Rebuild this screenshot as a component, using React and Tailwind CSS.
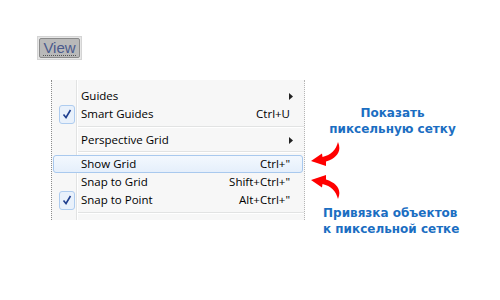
import React from 'react';

const CheckBox = () => (
  <div className="w-[16px] h-[19px] ml-[5px] flex items-center justify-center rounded-[3px] border border-[#aeccef] bg-[#e9f1fb]">
    <svg width="10" height="10" viewBox="0 0 10 10">
      <path d="M1.5 5.5 L4 8.5 L8.5 1" fill="none" stroke="#1f3f8f" strokeWidth="1.6" />
    </svg>
  </div>
);

const SubArrow = () => (
  <svg width="4" height="7" viewBox="0 0 4 7">
    <path d="M0 0 L4 3.5 L0 7 Z" fill="#222" />
  </svg>
);

const MenuItem = ({ label, shortcut, checked, submenu, active }) => (
  <div
    className={`flex items-center h-[18px] mx-[1px] ${
      active ? 'rounded-[3px] border border-[#a9c9ee] bg-[linear-gradient(#f3f8fe,#e5effb)]' : 'border border-transparent'
    }`}
  >
    <div className="w-[26px] shrink-0 flex items-center">{checked && <CheckBox />}</div>
    <div className="flex-1 pl-[1px] text-black">{label}</div>
    {shortcut && <div className="pr-[12px] text-black">{shortcut}</div>}
    {submenu && (
      <div className="pr-[9px] flex items-center">
        <SubArrow />
      </div>
    )}
  </div>
);

const Separator = () => (
  <div className="ml-[26px] h-[2px] border-t border-[#e2e3e3] bg-white" />
);

const RedArrow = ({ flip }) => (
  <svg width="30" height="24" viewBox="0 0 30 24" className={flip ? '-scale-y-100' : ''}>
    <path
      d="M27 0 C31 9 26 16 15 19.5 L15 24 L0 19 L11 11.5 L11.5 15 C20 13 25 8 27 0 Z"
      fill="#ff0000"
    />
  </svg>
);

const App = () => {
  return (
    <div className="w-[500px] h-[300px] bg-white font-['Open_Sans','Noto_Sans',sans-serif] overflow-hidden">
      {/* View button */}
      <div className="pt-[35px] pl-[37px]">
        <div className="inline-block p-[1px] bg-[#e6e6e6] border border-[#d4d4d4]">
          <div className="w-[41px] h-[20px] flex items-center justify-center bg-[#b9b9b9] border border-[#8a8a8a] rounded-[2px]">
            <span className="text-[15px] leading-none text-[#4b5a8c] border-b border-dotted border-[#555] font-['Liberation_Sans',sans-serif]">
              View
            </span>
          </div>
        </div>
      </div>

      <div className="flex mt-[20px]">
        {/* Menu */}
        <div className="ml-[51px] w-[254px] h-[140px] bg-[#f7f7f7] border-l border-dotted border-l-[#8c8c8c] border-r border-r-[#b5b5b5] relative text-[11.5px] leading-none">
          <div className="absolute left-[24px] top-0 bottom-0 w-[2px] border-l border-[#e2e3e3] bg-white" />
          <div className="relative pt-[7px]">
            <MenuItem label="Guides" submenu />
            <MenuItem label="Smart Guides" shortcut="Ctrl+U" checked />
            <div className="py-[3px]">
              <Separator />
            </div>
            <MenuItem label="Perspective Grid" submenu />
            <div className="py-[2px]">
              <Separator />
            </div>
            <MenuItem label="Show Grid" shortcut={'Ctrl+"'} active />
            <MenuItem label="Snap to Grid" shortcut={'Shift+Ctrl+"'} />
            <MenuItem label="Snap to Point" shortcut={'Alt+Ctrl+"'} checked />
            <div className="pt-[3px]">
              <Separator />
            </div>
          </div>
        </div>

        {/* Annotations */}
        <div className="w-[175px] flex flex-col text-[#1b6ec2] font-bold font-['DejaVu_Sans',sans-serif] text-[12px] leading-[16px]">
          <div className="mt-[25px] text-center">
            Показать
            <br />
            пиксельную сетку
          </div>
          <div className="mt-[5px] ml-[6px]">
            <RedArrow />
          </div>
          <div className="mt-[9px] ml-[6px]">
            <RedArrow flip />
          </div>
          <div className="mt-[6px] ml-[18px]">
            Привязка объектов
            <br />
            к пиксельной сетке
          </div>
        </div>
      </div>
    </div>
  );
};

export default App;
